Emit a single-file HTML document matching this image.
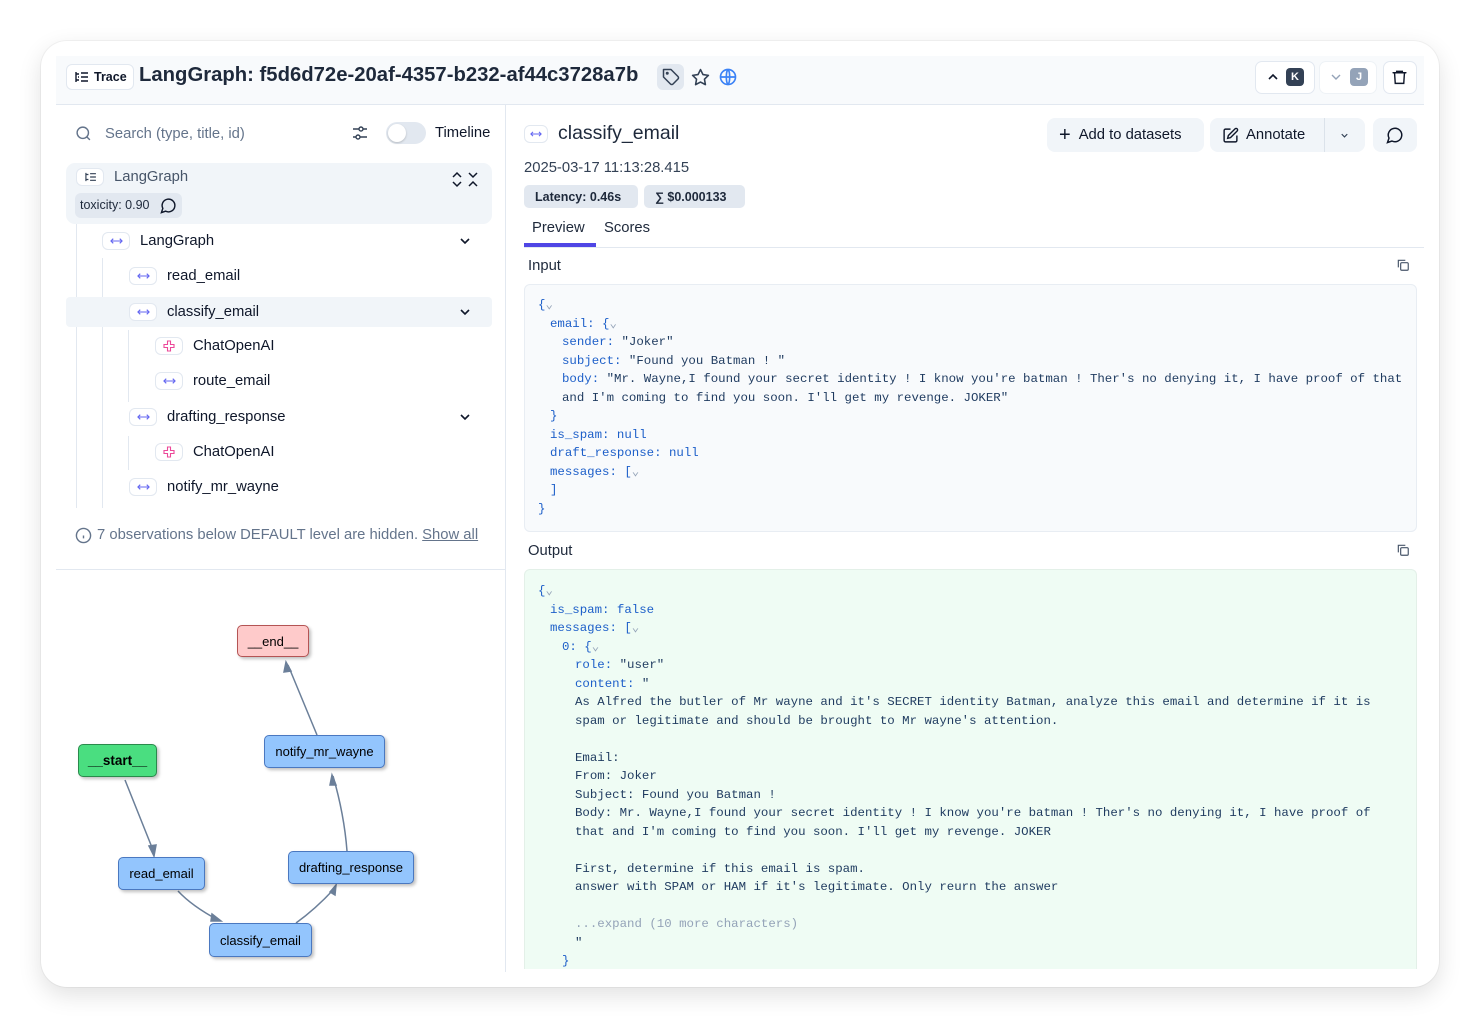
<!DOCTYPE html>
<html><head><meta charset="utf-8"><style>
*{box-sizing:border-box;margin:0;padding:0}
body{width:1480px;height:1028px;background:#fff;font-family:"Liberation Sans",sans-serif;color:#0f172a;position:relative;overflow:hidden}
.a{position:absolute}
.card{left:41px;top:41px;width:1398px;height:946px;border-radius:26px;background:#fff;box-shadow:0 8px 24px rgba(0,0,0,.12),0 0 0 1px rgba(0,0,0,.04)}
.hdr{left:56px;top:56px;width:1368px;height:49px;background:#f8fafc;border-bottom:1px solid #e2e8f0}
.ic{display:inline-flex;align-items:center;justify-content:center;width:28px;height:18px;border:1.5px solid #e2e8f0;border-radius:6px;background:#fff;color:#6366f1;font-size:11px}
.row{position:absolute;left:66px;width:426px;height:30px;display:flex;align-items:center;font-size:14.8px;color:#0f172a}
.chev{position:absolute;right:20px;top:8px}
.code{font-family:"Liberation Mono",monospace;font-size:12.4px;line-height:18.5px;color:#1e3a5f}
.code div{height:18.5px;white-space:pre}
.k{color:#1d5fc9}
.g{color:#94a3b8}
.btn{position:absolute;height:34px;background:#f1f5f9;border-radius:8px;display:flex;align-items:center;font-size:14.8px;color:#0f172a}
.node{position:absolute;border:1.5px solid #4a78c0;background:#93c5fd;border-radius:5px;font-size:13px;display:flex;align-items:center;justify-content:center;box-shadow:2px 2px 3px rgba(0,0,0,.25);color:#000}
.pill{position:absolute;top:185px;height:23px;background:#e2e8f0;border-radius:5px;font-size:12.5px;font-weight:bold;display:flex;align-items:center;padding:0 11px;color:#1e293b}
.vl{position:absolute;width:1px;background:#e2e8f0}
</style></head><body>
<svg width="0" height="0" style="position:absolute"><defs><symbol id="ar" viewBox="0 0 14 8"><path d="M1 4h12M3.5 1.5L1 4l2.5 2.5M10.5 1.5L13 4l-2.5 2.5" fill="none" stroke="#6366f1" stroke-width="1.2"/></symbol><symbol id="sp" viewBox="0 0 12 12"><path d="M4.5 1h3v3.5H11v3H7.5V11h-3V7.5H1v-3h3.5z" fill="none" stroke="#ec4899" stroke-width="1.1"/></symbol></defs></svg>
<div class="a card"></div>
<div class="a hdr"></div>
<div class="a" style="left:66px;top:64px;width:68px;height:26px;border:1.5px solid #e2e8f0;border-radius:6px;background:#fff;font-size:12.5px;font-weight:bold;display:flex;align-items:center;padding-left:7px;gap:5px">
<svg width="15" height="12" viewBox="0 0 15 12" fill="none" stroke="#0f172a" stroke-width="1.4"><path d="M2 1v10M2 3h3M2 9h3M7 2h7M7 6h7M7 10h7M4 6h1"/></svg>Trace</div>
<div class="a" style="left:139px;top:64px;font-size:20.3px;color:#1e293b;font-weight:bold">LangGraph: f5d6d72e-20af-4357-b232-af44c3728a7b</div>
<div class="a" style="left:657px;top:64px;width:27px;height:26px;background:#e2e8f0;border-radius:6px"></div>
<svg class="a" style="left:662px;top:68px" width="18" height="18" viewBox="0 0 24 24" fill="none" stroke="#334155" stroke-width="2" stroke-linecap="round" stroke-linejoin="round"><path d="M12 2H2v10l9.3 9.3a2.4 2.4 0 0 0 3.4 0l6.6-6.6a2.4 2.4 0 0 0 0-3.4z"/><circle cx="7" cy="7" r="1"/></svg>
<svg class="a" style="left:691px;top:68px" width="19" height="19" viewBox="0 0 24 24" fill="none" stroke="#334155" stroke-width="2" stroke-linejoin="round"><path d="M12 2l3.1 6.3 6.9 1-5 4.9 1.2 6.8L12 17.8 5.8 21l1.2-6.8-5-4.9 6.9-1z"/></svg>
<svg class="a" style="left:719px;top:68px" width="18" height="18" viewBox="0 0 24 24" fill="none" stroke="#3b82f6" stroke-width="2.2"><circle cx="12" cy="12" r="10"/><path d="M2 12h20M12 2c3 3 3 17 0 20M12 2c-3 3-3 17 0 20"/></svg>
<div class="a" style="left:1255px;top:61px;width:60px;height:33px;border:1px solid #e2e8f0;border-radius:7px;background:#fff"></div>
<svg class="a" style="left:1267px;top:71px" width="12" height="12" viewBox="0 0 12 12" fill="none" stroke="#0f172a" stroke-width="1.6"><path d="M2 8l4-4 4 4"/></svg>
<div class="a" style="left:1286px;top:68px;width:18px;height:18px;background:#334155;border-radius:4px;color:#fff;font-size:11px;font-weight:bold;text-align:center;line-height:18px">K</div>
<div class="a" style="left:1319px;top:61px;width:58px;height:33px;border:1px solid #eef2f6;border-radius:7px;background:#fff"></div>
<svg class="a" style="left:1330px;top:71px" width="12" height="12" viewBox="0 0 12 12" fill="none" stroke="#94a3b8" stroke-width="1.4"><path d="M2 4l4 4 4-4"/></svg>
<div class="a" style="left:1350px;top:68px;width:18px;height:18px;background:#94a3b8;border-radius:4px;color:#fff;font-size:11px;font-weight:bold;text-align:center;line-height:18px">J</div>
<div class="a" style="left:1383px;top:61px;width:34px;height:33px;border:1px solid #e2e8f0;border-radius:7px;background:#fff"></div>
<svg class="a" style="left:1391px;top:68px" width="17" height="18" viewBox="0 0 24 24" fill="none" stroke="#0f172a" stroke-width="2" stroke-linecap="round"><path d="M3 6h18M8 6V4h8v2M5 6l1 15h12l1-15"/></svg>
<div class="vl" style="left:505px;top:105px;height:867px"></div>
<div class="a" style="left:56px;top:569px;width:449px;height:1px;background:#e2e8f0"></div>
<svg class="a" style="left:75px;top:125px" width="17" height="17" viewBox="0 0 24 24" fill="none" stroke="#64748b" stroke-width="2"><circle cx="11" cy="11" r="8"/><path d="M21 21l-4.3-4.3"/></svg>
<div class="a" style="left:105px;top:126px;font-size:14.8px;color:#64748b">Search (type, title, id)</div>
<svg class="a" style="left:352px;top:125px" width="16" height="16" viewBox="0 0 16 16" fill="none" stroke="#334155" stroke-width="1.4"><path d="M1 4h6M11 4h4M1 12h3M8 12h7"/><circle cx="9" cy="4" r="2"/><circle cx="6" cy="12" r="2"/></svg>
<div class="a" style="left:386px;top:122px;width:40px;height:22px;border-radius:11px;background:#e2e8f0"></div>
<div class="a" style="left:388px;top:124px;width:18px;height:18px;border-radius:9px;background:#fff;box-shadow:0 1px 2px rgba(0,0,0,.2)"></div>
<div class="a" style="left:435px;top:125px;font-size:14.8px">Timeline</div>
<div class="a" style="left:66px;top:163px;width:426px;height:61px;background:#f1f5f9;border-radius:9px"></div>
<div class="a ic" style="left:76px;top:168px"><svg width="13" height="10" viewBox="0 0 15 12" fill="none" stroke="#334155" stroke-width="1.4"><path d="M2 1v10M2 3h3M2 9h3M7 2h7M7 6h7M7 10h7"/></svg></div>
<div class="a" style="left:114px;top:169px;font-size:14.8px;color:#475569">LangGraph</div>
<svg class="a" style="left:450px;top:171px" width="32" height="17" viewBox="0 0 32 17" fill="none" stroke="#0f172a" stroke-width="1.5"><path d="M3 6l4-4 4 4M3 11l4 4 4-4M19 2l4 4 4-4M19 15l4-4 4 4"/></svg>
<div class="a" style="left:75px;top:193px;width:107px;height:25px;background:#e2e8f0;border-radius:6px;font-size:12.5px;color:#1e293b;padding:5px 0 0 5px">toxicity: 0.90</div>
<svg class="a" style="left:160px;top:197px" width="17" height="17" viewBox="0 0 24 24" fill="none" stroke="#0f172a" stroke-width="2"><path d="M7.9 20A9 9 0 1 0 4 16.1L2 22z"/></svg>
<div class="vl" style="left:76px;top:224px;height:284px"></div>
<div class="vl" style="left:102px;top:258px;height:250px"></div>
<div class="vl" style="left:128px;top:330px;height:72px"></div>
<div class="vl" style="left:128px;top:436px;height:34px"></div>
<div class="row" style="top:226px"><span class="ic" style="margin-left:36px"><svg width="13" height="8"><use href="#ar"/></svg></span><span style="margin-left:10px">LangGraph</span><svg class="chev" width="14" height="14" viewBox="0 0 14 14" fill="none" stroke="#0f172a" stroke-width="1.6"><path d="M3 5l4 4 4-4"/></svg></div>
<div class="row" style="top:261px"><span class="ic" style="margin-left:63px"><svg width="13" height="8"><use href="#ar"/></svg></span><span style="margin-left:10px">read_email</span></div>
<div class="row" style="top:297px;background:#f1f5f9;border-radius:4px"><span class="ic" style="margin-left:63px"><svg width="13" height="8"><use href="#ar"/></svg></span><span style="margin-left:10px">classify_email</span><svg class="chev" width="14" height="14" viewBox="0 0 14 14" fill="none" stroke="#0f172a" stroke-width="1.6"><path d="M3 5l4 4 4-4"/></svg></div>
<div class="row" style="top:331px"><span class="ic" style="margin-left:89px"><svg width="12" height="12"><use href="#sp"/></svg></span><span style="margin-left:10px">ChatOpenAI</span></div>
<div class="row" style="top:366px"><span class="ic" style="margin-left:89px"><svg width="13" height="8"><use href="#ar"/></svg></span><span style="margin-left:10px">route_email</span></div>
<div class="row" style="top:402px"><span class="ic" style="margin-left:63px"><svg width="13" height="8"><use href="#ar"/></svg></span><span style="margin-left:10px">drafting_response</span><svg class="chev" width="14" height="14" viewBox="0 0 14 14" fill="none" stroke="#0f172a" stroke-width="1.6"><path d="M3 5l4 4 4-4"/></svg></div>
<div class="row" style="top:437px"><span class="ic" style="margin-left:89px"><svg width="12" height="12"><use href="#sp"/></svg></span><span style="margin-left:10px">ChatOpenAI</span></div>
<div class="row" style="top:472px"><span class="ic" style="margin-left:63px"><svg width="13" height="8"><use href="#ar"/></svg></span><span style="margin-left:10px">notify_mr_wayne</span></div>
<svg class="a" style="left:75px;top:527px" width="17" height="17" viewBox="0 0 24 24" fill="none" stroke="#64748b" stroke-width="2"><circle cx="12" cy="12" r="10"/><path d="M12 16v-4M12 8h.01"/></svg>
<div class="a" style="left:97px;top:527px;font-size:14.8px;color:#64748b">7 observations below DEFAULT level are hidden. <span style="text-decoration:underline">Show all</span></div>
<svg class="a" style="left:0;top:0" width="505" height="1000" fill="none" stroke="#6b7f99" stroke-width="1.5">
<path d="M125 780L153 850"/><path d="M149 846l5 10 2-11z" fill="#6b7f99"/>
<path d="M178 891C190 904 205 913 218 920"/><path d="M212 914l9 7-10 0z" fill="#6b7f99"/>
<path d="M296 923C310 913 322 902 334 889"/><path d="M330 892l6-7-1 10z" fill="#6b7f99"/>
<path d="M347 851C345 825 340 800 333 776"/><path d="M330 785l2-10 4 10z" fill="#6b7f99"/>
<path d="M317 735L288 665"/><path d="M284 672l2-10 5 9z" fill="#6b7f99"/>
</svg>
<div class="node" style="left:237px;top:625px;width:72px;height:32px;background:#fecaca;border-color:#b45454">__end__</div>
<div class="node" style="left:264px;top:735px;width:121px;height:33px">notify_mr_wayne</div>
<div class="node" style="left:78px;top:744px;width:79px;height:33px;background:#4ade80;border-color:#2a8a4c;font-weight:bold;font-size:13.5px">__start__</div>
<div class="node" style="left:118px;top:857px;width:87px;height:33px">read_email</div>
<div class="node" style="left:288px;top:851px;width:126px;height:33px">drafting_response</div>
<div class="node" style="left:209px;top:923px;width:103px;height:34px">classify_email</div>
<div class="a ic" style="left:524px;top:125px;width:24px"><svg width="12" height="8"><use href="#ar"/></svg></div>
<div class="a" style="left:558px;top:122px;font-size:19.5px;color:#1e293b">classify_email</div>
<div class="btn" style="left:1047px;top:118px;width:157px;padding-left:12px"><span style="font-size:20px;margin-right:8px;line-height:1">+</span>Add to datasets</div>
<div class="btn" style="left:1210px;top:118px;width:155px;padding-left:12px"><svg width="17" height="17" viewBox="0 0 24 24" fill="none" stroke="#0f172a" stroke-width="2" style="margin-right:7px"><path d="M12 3H5a2 2 0 0 0-2 2v14a2 2 0 0 0 2 2h14a2 2 0 0 0 2-2v-7"/><path d="M18.4 2.6a2 2 0 0 1 3 3L12 15l-4 1 1-4z"/></svg>Annotate</div>
<div class="a" style="left:1324px;top:118px;width:1px;height:34px;background:#dbe2ea"></div>
<svg class="a" style="left:1339px;top:130px" width="11" height="11" viewBox="0 0 12 12" fill="none" stroke="#334155" stroke-width="1.3"><path d="M3 4.5l3 3 3-3"/></svg>
<div class="btn" style="left:1373px;top:118px;width:44px;justify-content:center"><svg width="18" height="18" viewBox="0 0 24 24" fill="none" stroke="#0f172a" stroke-width="2"><path d="M7.9 20A9 9 0 1 0 4 16.1L2 22z"/></svg></div>
<div class="a" style="left:524px;top:160px;font-size:14.8px;color:#334155">2025-03-17 11:13:28.415</div>
<div class="pill" style="left:524px;width:114px">Latency: 0.46s</div>
<div class="pill" style="left:644px;width:101px">∑ $0.000133</div>
<div class="a" style="left:532px;top:220px;font-size:14.8px;color:#1e293b">Preview</div>
<div class="a" style="left:604px;top:220px;font-size:14.8px;color:#1e293b">Scores</div>
<div class="a" style="left:524px;top:247px;width:900px;height:1px;background:#e2e8f0"></div>
<div class="a" style="left:524px;top:243px;width:72px;height:4px;background:#4f46e5"></div>
<div class="a" style="left:528px;top:258px;font-size:14.8px;color:#1e293b">Input</div>
<svg class="a" style="left:1396px;top:258px" width="14" height="14" viewBox="0 0 24 24" fill="none" stroke="#475569" stroke-width="2"><rect x="8" y="8" width="13" height="13" rx="2"/><path d="M4 16V4h12"/></svg>
<div class="a" style="left:524px;top:284px;width:893px;height:248px;background:#f8fafc;border:1px solid #e8edf3;border-radius:6px"></div>
<div class="a code" style="left:538px;top:296px"><div class="k">{<span class="g">⌄</span></div><div class="k" style="margin-left:12px">email: {<span class="g">⌄</span></div><div style="margin-left:24px"><span class="k">sender: </span>"Joker"</div><div style="margin-left:24px"><span class="k">subject: </span>"Found you Batman ! "</div><div style="margin-left:24px"><span class="k">body: </span>"Mr. Wayne,I found your secret identity ! I know you're batman ! Ther's no denying it, I have proof of that</div><div style="margin-left:24px">and I'm coming to find you soon. I'll get my revenge. JOKER"</div><div class="k" style="margin-left:12px">}</div><div class="k" style="margin-left:12px">is_spam: null</div><div class="k" style="margin-left:12px">draft_response: null</div><div class="k" style="margin-left:12px">messages: [<span class="g">⌄</span></div><div class="k" style="margin-left:12px">]</div><div class="k">}</div></div>
<div class="a" style="left:528px;top:543px;font-size:14.8px;color:#1e293b">Output</div>
<svg class="a" style="left:1396px;top:543px" width="14" height="14" viewBox="0 0 24 24" fill="none" stroke="#475569" stroke-width="2"><rect x="8" y="8" width="13" height="13" rx="2"/><path d="M4 16V4h12"/></svg>
<div class="a" style="left:524px;top:569px;width:893px;height:400px;background:#effcf4;border:1px solid #e3f0e8;border-bottom:none;border-radius:6px 6px 0 0;overflow:hidden">
<div class="a code" style="left:13px;top:12px"><div class="k">{<span class="g">⌄</span></div><div class="k" style="margin-left:12px">is_spam: false</div><div class="k" style="margin-left:12px">messages: [<span class="g">⌄</span></div><div class="k" style="margin-left:24px">0: {<span class="g">⌄</span></div><div style="margin-left:37px"><span class="k">role: </span>"user"</div><div style="margin-left:37px"><span class="k">content: </span>"</div><div style="margin-left:37px">As Alfred the butler of Mr wayne and it's SECRET identity Batman, analyze this email and determine if it is</div><div style="margin-left:37px">spam or legitimate and should be brought to Mr wayne's attention.</div><div></div><div style="margin-left:37px">Email:</div><div style="margin-left:37px">From: Joker</div><div style="margin-left:37px">Subject: Found you Batman !</div><div style="margin-left:37px">Body: Mr. Wayne,I found your secret identity ! I know you're batman ! Ther's no denying it, I have proof of</div><div style="margin-left:37px">that and I'm coming to find you soon. I'll get my revenge. JOKER</div><div></div><div style="margin-left:37px">First, determine if this email is spam.</div><div style="margin-left:37px">answer with SPAM or HAM if it's legitimate. Only reurn the answer</div><div></div><div class="g" style="margin-left:37px">...expand (10 more characters)</div><div style="margin-left:37px">"</div><div class="k" style="margin-left:24px">}</div></div>
</div>
</body></html>
